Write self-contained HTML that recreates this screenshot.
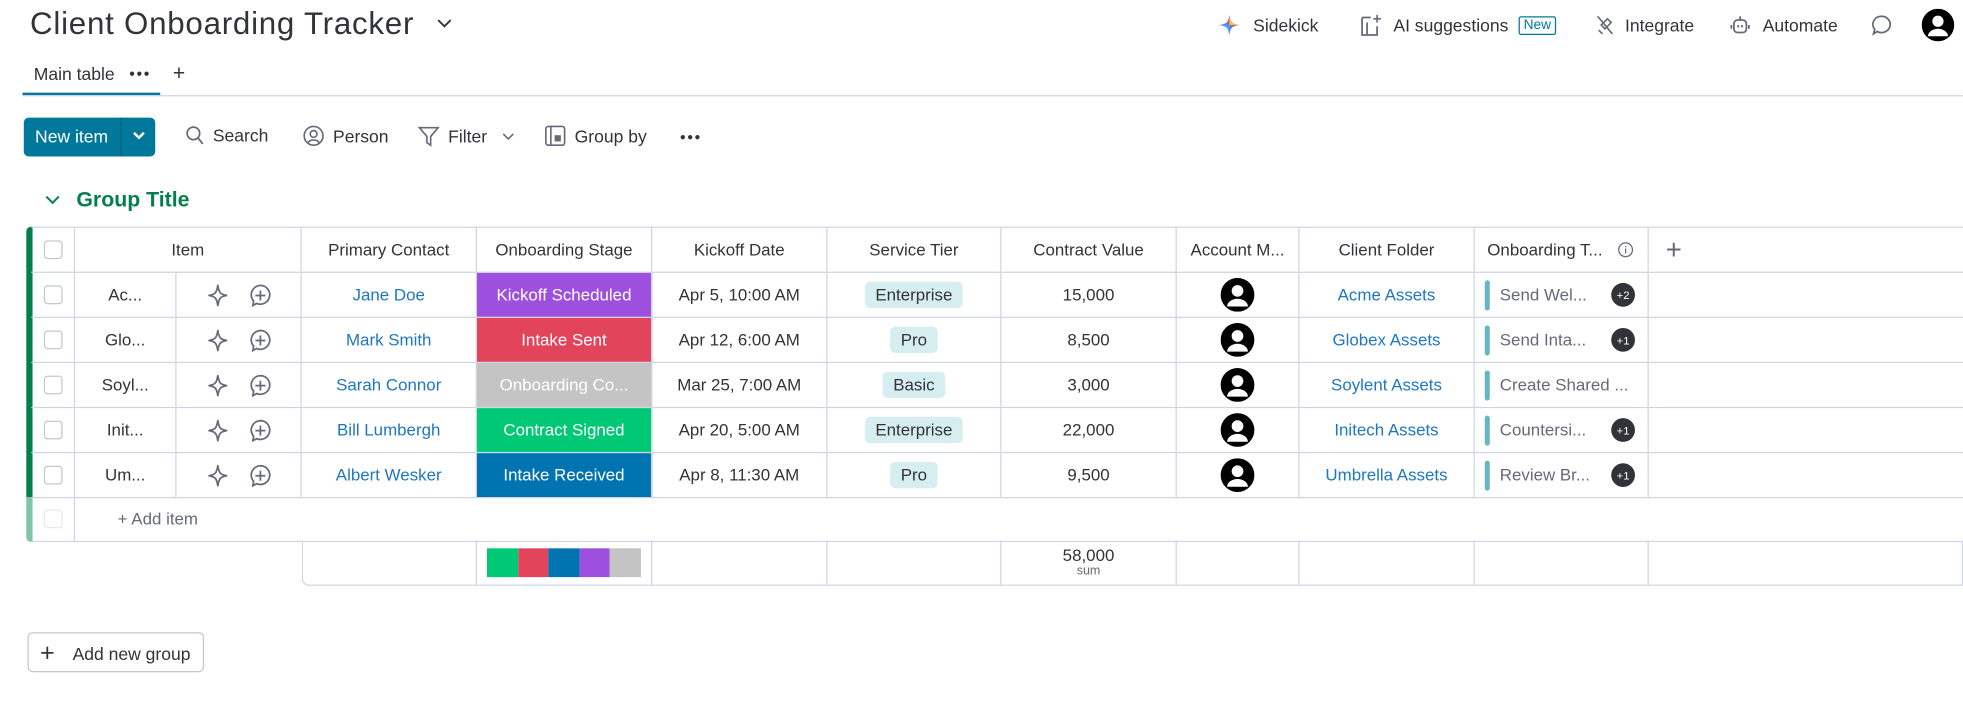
<!DOCTYPE html>
<html><head><meta charset="utf-8">
<style>
*{box-sizing:border-box;margin:0;padding:0}
html,body{width:1963px;height:716px;overflow:hidden;background:#fff}
#w{position:absolute;left:0;top:0;width:1568px;height:572px;transform:scale(1.25191);transform-origin:0 0;font-family:"Liberation Sans",sans-serif;color:#323338;font-size:13.5px}
.a{position:absolute}
.row{position:absolute;left:25px;height:36px;display:flex;border-bottom:1px solid #d0d4e4}
.c{height:100%;display:flex;align-items:center;justify-content:center;border-right:1px solid #d0d4e4;white-space:nowrap;overflow:hidden;flex:none}
.cb{width:15px;height:15px;border:1px solid #c3c6d4;border-radius:3px}
.lnk{color:#1f76c2}
.tag{background:#d6eef0;border-radius:4px;padding:3px 8px}
.av{width:27px;height:27px}
.task{justify-content:flex-start;padding-left:8px}
.bar{width:4px;height:24px;background:#66b5c2;border-radius:2px;margin-right:8px}
.bd{position:absolute;right:10px;width:19px;height:19px;border-radius:50%;background:#323338;color:#fff;font-size:9px;display:flex;align-items:center;justify-content:center}
.tb{display:flex;align-items:center;gap:7px;position:absolute;top:100px;font-size:14px}
.dots{position:absolute;font-size:8px;letter-spacing:1px;color:#323338}
</style></head><body><div id="w">
<div class="a" style="left:24px;top:5px;font-size:25px;letter-spacing:0.6px">Client Onboarding Tracker</div>
<svg class="a" style="left:348px;top:14px" width="14" height="10"><path d="M2 2l5 5 5-5" stroke="#323338" stroke-width="1.5" fill="none"/></svg>
<div class="a" style="left:27px;top:51px;font-size:14px">Main table</div>
<div class="dots" style="left:103px;top:54px">●●●</div>
<div class="a" style="left:138px;top:49px;font-size:17px">+</div>
<div class="a" style="left:18px;top:74px;width:110px;height:2px;background:#00789c"></div>
<div class="a" style="left:18px;top:76px;width:1550px;height:1px;background:#d0d4e4"></div>
<!-- top right -->
<svg class="a" style="left:974px;top:12px" width="16" height="16"><path d="M8 0C9 6 10 7 16 8 10 9 9 10 8 16 7 10 6 9 0 8 6 7 7 6 8 0Z" fill="#a25ddc"/><path d="M8 0C9 6 10 7 16 8H8Z" fill="#ffcb00"/><path d="M0 8C6 9 7 10 8 16V8Z" fill="#00c2ff"/></svg>
<div class="a" style="left:1001px;top:12px;font-size:14px">Sidekick</div>
<svg class="a" style="left:1086px;top:11px" width="18" height="18"><path d="M2 3h7M2 3v14h7M6 7v10M14 10v7h-5" stroke="#676879" stroke-width="1.4" fill="none"/><path d="M14 1v6M11 4h6" stroke="#676879" stroke-width="1.3"/></svg>
<div class="a" style="left:1113px;top:12px;font-size:14px">AI suggestions</div>
<div class="a" style="left:1213px;top:13px;border:1px solid #00789c;color:#00789c;font-size:11px;padding:0 3px;border-radius:2px;line-height:13px">New</div>
<svg class="a" style="left:1274px;top:11px" width="16" height="18"><path d="M3 3l10 12M5 9l5-5 3 3-5 5zM2 2l2 2M12 14l2 2M3 13l3 3" stroke="#676879" stroke-width="1.3" fill="none"/></svg>
<div class="a" style="left:1298px;top:12px;font-size:14px">Integrate</div>
<svg class="a" style="left:1382px;top:12px" width="16" height="16"><rect x="3" y="4" width="10" height="10" rx="3" stroke="#676879" stroke-width="1.4" fill="none"/><path d="M8 1v3M1 8v3M15 8v3M6.5 8v2M9.5 8v2" stroke="#676879" stroke-width="1.4"/></svg>
<div class="a" style="left:1408px;top:12px;font-size:14px">Automate</div>
<svg class="a" style="left:1494px;top:11px" width="18" height="18"><path d="M9 2a7 6.5 0 1 1-3.5 12.2L2.5 16l1-3.5A7 6.5 0 0 1 9 2z" stroke="#676879" stroke-width="1.4" fill="none"/></svg>
<svg class="a" style="left:1535px;top:7px" width="26" height="26"><circle cx="13" cy="13" r="13" fill="#000"/><circle cx="13" cy="10" r="4.5" fill="#fff"/><path d="M5 22a8 6 0 0 1 16 0z" fill="#fff"/></svg>
<!-- toolbar -->
<div class="a" style="left:19px;top:94px;width:105px;height:31px;background:#00789c;border-radius:4px;color:#fff;font-size:14px">
<span class="a" style="left:9px;top:7px">New item</span><div class="a" style="left:77px;top:0;width:1px;height:31px;background:#005f7a"></div>
<svg class="a" style="left:86px;top:10px" width="12" height="10"><path d="M2 2l4 4 4-4" stroke="#fff" stroke-width="2" fill="none"/></svg></div>
<div class="tb" style="left:148px"><svg width="15" height="16"><circle cx="6.5" cy="6.5" r="5" stroke="#676879" stroke-width="1.4" fill="none"/><path d="M10 10l4 5" stroke="#676879" stroke-width="1.4"/></svg>Search</div>
<div class="tb" style="left:242px"><svg width="17" height="17"><circle cx="8.5" cy="8.5" r="7.5" stroke="#676879" stroke-width="1.3" fill="none"/><circle cx="8.5" cy="7" r="2.7" stroke="#676879" stroke-width="1.3" fill="none"/><path d="M4 14a5 4 0 0 1 9 0" stroke="#676879" stroke-width="1.3" fill="none"/></svg>Person</div>
<div class="tb" style="left:334px"><svg width="17" height="18"><path d="M1 2h15l-6 7v7l-3-2V9z" stroke="#676879" stroke-width="1.3" fill="none"/></svg>Filter<svg style="margin-left:5px" width="10" height="8"><path d="M1 2l4 4 4-4" stroke="#676879" stroke-width="1.3" fill="none"/></svg></div>
<div class="tb" style="left:435px"><svg width="17" height="17"><rect x="1" y="1" width="15" height="15" rx="2" stroke="#676879" stroke-width="1.3" fill="none"/><path d="M5 1v15" stroke="#676879" stroke-width="1.3"/><rect x="8" y="8" width="5" height="5" fill="#676879"/></svg>Group by</div>
<div class="dots" style="left:543px;top:105px">●●●</div>
<!-- group -->
<svg class="a" style="left:36px;top:155px" width="12" height="10"><path d="M1 2l5 5 5-5" stroke="#037f4c" stroke-width="1.6" fill="none"/></svg>
<div class="a" style="left:61px;top:150px;font-size:17px;color:#037f4c;font-weight:bold">Group Title</div>
<div class="a" style="left:21px;top:181px;width:5px;height:216px;background:#037f4c;border-radius:4px 0 0 0"></div>
<div class="a" style="left:21px;top:397px;width:5px;height:36px;background:#81c3a6;border-radius:0 0 0 4px"></div>
<div class="a" style="left:25px;top:181px;width:1543px;height:1px;background:#d0d4e4"></div>
<!-- header -->
<div class="row" style="top:182px;width:1543px;height:36px">
<div class="c" style="width:35px"><div class="cb"></div></div>
<div class="c" style="width:181px">Item</div>
<div class="c" style="width:140px">Primary Contact</div>
<div class="c" style="width:140px">Onboarding Stage</div>
<div class="c" style="width:140px">Kickoff Date</div>
<div class="c" style="width:139px">Service Tier</div>
<div class="c" style="width:140px">Contract Value</div>
<div class="c" style="width:98px">Account M...</div>
<div class="c" style="width:140px">Client Folder</div>
<div class="c" style="width:139px;justify-content:flex-start;padding-left:10px">Onboarding T...<svg style="margin-left:12px" width="13" height="13"><circle cx="6.5" cy="6.5" r="5.5" stroke="#676879" fill="none"/><path d="M6.5 5.5v4M6.5 3.5v1" stroke="#676879"/></svg></div>
<div class="c" style="width:40px;border:none;font-size:22px;color:#676879;font-weight:300">+</div>
</div>
<div id="rows"></div>
<!-- add item -->
<div class="row" style="top:397px;width:1543px;height:36px">
<div class="c" style="width:35px"><div class="cb" style="border-color:#e6e9ef"></div></div>
<div class="c" style="width:1508px;border:none;justify-content:flex-start;padding-left:34px;color:#676879">+ Add item</div></div>
<!-- footer -->
<div class="a" style="left:241px;top:432px;width:1327px;height:36px;border:1px solid #d0d4e4;border-top:none;border-radius:0 0 0 6px;display:flex">
<div class="c" style="width:139px"></div>
<div class="c" style="width:140px"><div style="display:flex;width:123px;height:23px"><div style="flex:1;background:#00c875"></div><div style="flex:1;background:#e2445c"></div><div style="flex:1;background:#0073b1"></div><div style="flex:1;background:#9d50dd"></div><div style="flex:1;background:#c4c4c4"></div></div></div>
<div class="c" style="width:140px"></div><div class="c" style="width:139px"></div>
<div class="c" style="width:140px;flex-direction:column;line-height:13px">58,000<span style="font-size:10px;color:#676879">sum</span></div>
<div class="c" style="width:98px"></div><div class="c" style="width:140px"></div><div class="c" style="width:139px"></div></div>
<div class="a" style="left:22px;top:505px;width:141px;height:32px;border:1px solid #c3c6d4;border-radius:4px;font-size:14px"><span class="a" style="left:9px;top:5px;font-size:20px;font-weight:300">+</span><span class="a" style="left:35px;top:8px">Add new group</span></div>
</div>
<script>
var d=[["Ac...","Jane Doe","Kickoff Scheduled","#9d50dd","Apr 5, 10:00 AM","Enterprise","15,000","Acme Assets","Send Wel...","+2"],
["Glo...","Mark Smith","Intake Sent","#e2445c","Apr 12, 6:00 AM","Pro","8,500","Globex Assets","Send Inta...","+1"],
["Soyl...","Sarah Connor","Onboarding Co...","#c4c4c4","Mar 25, 7:00 AM","Basic","3,000","Soylent Assets","Create Shared ...",""],
["Init...","Bill Lumbergh","Contract Signed","#00c875","Apr 20, 5:00 AM","Enterprise","22,000","Initech Assets","Countersi...","+1"],
["Um...","Albert Wesker","Intake Received","#0073b1","Apr 8, 11:30 AM","Pro","9,500","Umbrella Assets","Review Br...","+1"]];
var h="";
var av='<svg class="av" viewBox="0 0 26 26"><circle cx="13" cy="13" r="13" fill="#000"/><circle cx="13" cy="10" r="4.5" fill="#fff"/><path d="M5 22a8 6 0 0 1 16 0z" fill="#fff"/></svg>';
var ic='<svg width="20" height="20" style="margin-right:14px"><path d="M10 2C11 8 12 9 17 10 12 11 11 12 10 18 9 12 8 11 3 10 8 9 9 8 10 2Z" stroke="#676879" stroke-width="1.4" fill="none" stroke-linejoin="round"/></svg><svg width="20" height="20"><path d="M10 2a7.5 7.5 0 1 1-3 14.4L4 18l.6-3.5A7.5 7.5 0 0 1 10 2zM10 6v8M6 10h8" stroke="#676879" stroke-width="1.4" fill="none"/></svg>';
d.forEach(function(r,i){h+='<div class="row" style="top:'+(218+i*36)+'px;width:1543px">'+
'<div class="c" style="width:35px"><div class="cb"></div></div>'+
'<div class="c" style="width:81px">'+r[0]+'</div>'+
'<div class="c" style="width:100px">'+ic+'</div>'+
'<div class="c lnk" style="width:140px">'+r[1]+'</div>'+
'<div class="c" style="width:140px;background:'+r[3]+';color:#fff">'+r[2]+'</div>'+
'<div class="c" style="width:140px">'+r[4]+'</div>'+
'<div class="c" style="width:139px"><span class="tag">'+r[5]+'</span></div>'+
'<div class="c" style="width:140px">'+r[6]+'</div>'+
'<div class="c" style="width:98px">'+av+'</div>'+
'<div class="c lnk" style="width:140px">'+r[7]+'</div>'+
'<div class="c task" style="width:139px;position:relative"><div class="bar"></div><span style="color:#676879">'+r[8]+'</span>'+(r[9]?'<div class="bd">'+r[9]+'</div>':'')+'</div></div>';});
document.getElementById("rows").outerHTML=h;
</script>
</body></html>
